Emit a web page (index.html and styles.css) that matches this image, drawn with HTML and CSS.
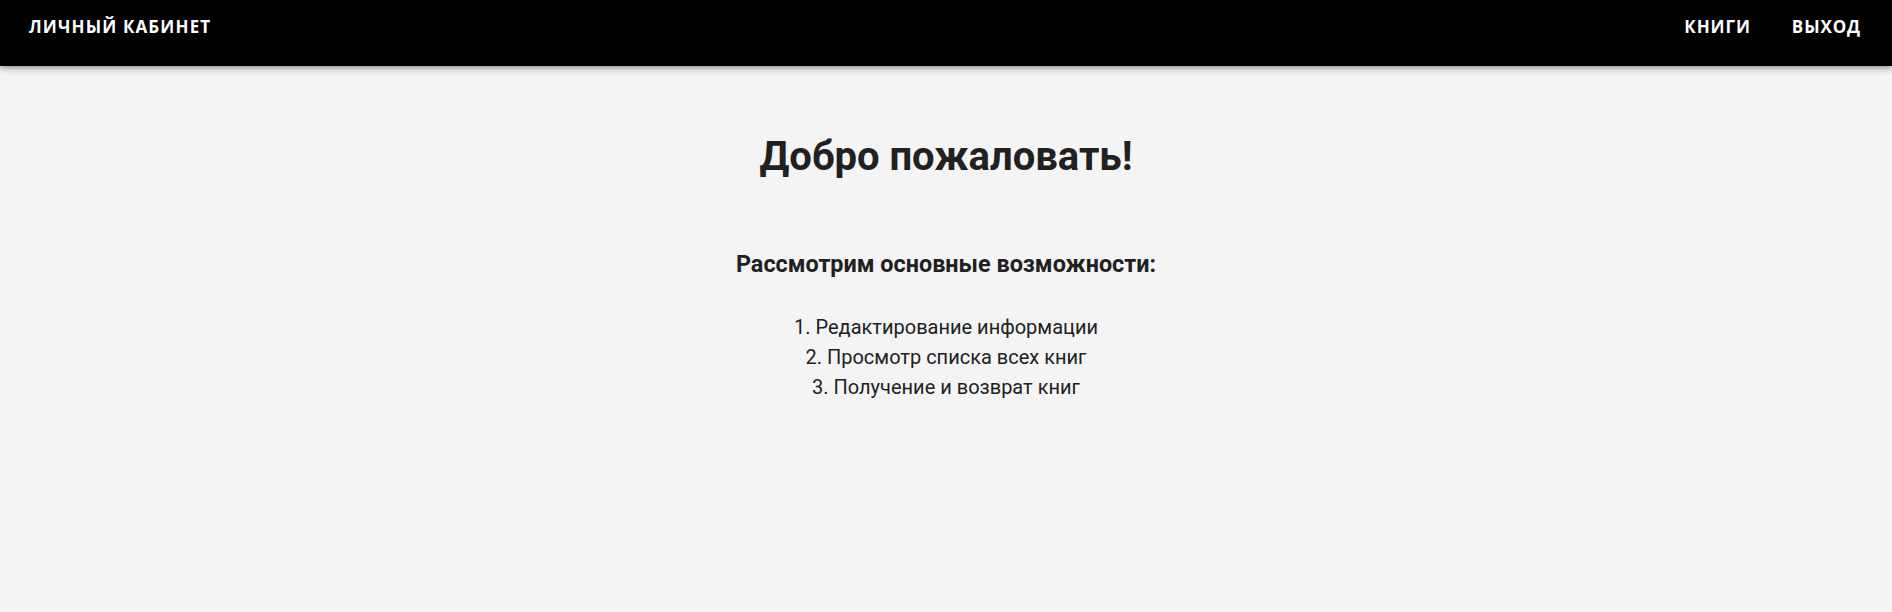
FILE: index.html
```html
<!DOCTYPE html>
<html lang="ru">
<head>
<meta charset="utf-8">
<title>Личный кабинет</title>
<link rel="stylesheet" href="styles.css">
</head>
<body>
<header class="appbar">
  <a class="brand" href="#">Личный кабинет</a>
  <nav class="nav">
    <a class="nav-link" href="#">Книги</a>
    <a class="nav-link" href="#">Выход</a>
  </nav>
</header>
<main class="content">
  <h1 class="title">Добро пожаловать!</h1>
  <h2 class="subtitle">Рассмотрим основные возможности:</h2>
  <ol class="features">
    <li>1. Редактирование информации</li>
    <li>2. Просмотр списка всех книг</li>
    <li>3. Получение и возврат книг</li>
  </ol>
</main>
</body>
</html>
```
FILE: styles.css
```css
* { box-sizing: border-box; }
html, body { margin: 0; padding: 0; }
body {
  background: #f4f4f4;
  color: #212121;
  font-family: Roboto, "Liberation Sans", sans-serif;
  min-height: 612px;
}
.appbar {
  position: relative;
  z-index: 1;
  height: 66px;
  background: #000;
  display: flex;
  justify-content: space-between;
  align-items: flex-start;
  padding: 14px 31px 0 29px;
  box-shadow: 0 2px 4px -1px rgba(0,0,0,0.2), 0 4px 5px 0 rgba(0,0,0,0.14), 0 1px 10px 0 rgba(0,0,0,0.12);
}
.brand, .nav-link {
  color: #fff;
  text-decoration: none;
  text-transform: uppercase;
  font-family: "Open Sans", Roboto, sans-serif;
  font-weight: 700;
  font-size: 17px;
  letter-spacing: 0.9px;
  line-height: 26px;
}
.brand { letter-spacing: 1.15px; }
.nav { display: flex; gap: 41px; }
.content {
  display: flex;
  flex-direction: column;
  align-items: center;
  text-align: center;
}
.title {
  margin: 67px 0 0;
  font-size: 40px;
  line-height: 48px;
  font-weight: 700;
}
.subtitle {
  margin: 69px 0 0;
  font-size: 23.4px;
  line-height: 28px;
  font-weight: 700;
}
.features {
  list-style: none;
  margin: 34px 0 0;
  padding: 0;
  font-size: 20px;
  line-height: 30px;
}
```
